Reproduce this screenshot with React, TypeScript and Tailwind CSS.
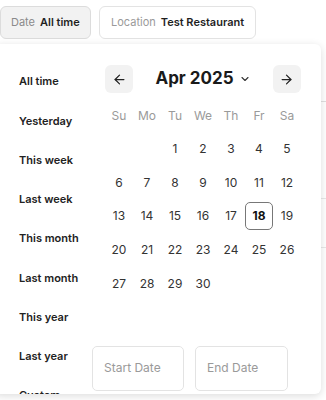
import React from "react";
import { ArrowLeft, ArrowRight, ChevronDown } from "lucide-react";

const presets = [
  "All time",
  "Yesterday",
  "This week",
  "Last week",
  "This month",
  "Last month",
  "This year",
  "Last year",
  "Custom",
];

const weekdays = ["Su", "Mo", "Tu", "We", "Th", "Fr", "Sa"];

const weeks: (number | null)[][] = [
  [null, null, 1, 2, 3, 4, 5],
  [6, 7, 8, 9, 10, 11, 12],
  [13, 14, 15, 16, 17, 18, 19],
  [20, 21, 22, 23, 24, 25, 26],
  [27, 28, 29, 30, null, null, null],
];

export default function App() {
  return (
    <div
      className="relative w-[326px] h-[400px] overflow-hidden bg-white text-[#1f1f1f]"
      style={{ fontFamily: "Inter, 'Noto Sans', sans-serif" }}
    >
      {/* background page */}
      <div className="flex gap-[8px] pt-[6px]">
        <div className="h-[33px] w-[91px] flex items-center pl-[10px] gap-[5px] rounded-[6px] border border-[#dcdcdc] bg-[#f2f2f2] text-[11px] whitespace-nowrap">
          <span className="text-[#8a8a8a]">Date</span>
          <span className="font-semibold text-[#1f1f1f]">All time</span>
        </div>
        <div className="h-[33px] w-[157px] flex items-center pl-[11px] gap-[5px] rounded-[6px] border border-[#e3e3e3] bg-white text-[11px] whitespace-nowrap">
          <span className="text-[#9a9a9a]">Location</span>
          <span className="font-semibold text-[#1f1f1f]">Test Restaurant</span>
        </div>
      </div>
      <div className="mt-[62px] border-t border-[#e0e0e0]" />
      <div className="mt-[96px] border-t border-[#e8e8e8]" />
      <div className="mt-[48px] border-t border-[#e8e8e8]" />

      {/* popover */}
      <div className="absolute left-[-6px] top-[44px] w-[327px] h-[350px] rounded-[6px] bg-white shadow-[0_2px_8px_rgba(0,0,0,0.14)] flex overflow-hidden">
        <div className="w-[98px] pl-[25px] pt-[18px] flex flex-col shrink-0">
          {presets.map((p) => (
            <div
              key={p}
              className="h-[39.25px] shrink-0 flex items-center text-[11px] font-semibold text-[#222] whitespace-nowrap"
            >
              {p}
            </div>
          ))}
        </div>
        <div className="flex flex-col pt-[21px]">
          <div className="ml-[13px] w-[196px]">
            <div className="flex items-center justify-between h-[28px]">
              <button className="w-[28px] h-[28px] rounded-[6px] bg-[#f2f2f2] flex items-center justify-center">
                <ArrowLeft size={15} strokeWidth={2} color="#222" />
              </button>
              <div className="flex items-center gap-[5px] text-[17px] font-bold text-[#1a1a1a]">
                <span>Apr 2025</span>
                <ChevronDown size={12} strokeWidth={2.2} color="#333" />
              </div>
              <button className="w-[28px] h-[28px] rounded-[6px] bg-[#f2f2f2] flex items-center justify-center">
                <ArrowRight size={15} strokeWidth={2} color="#222" />
              </button>
            </div>
            <div className="mt-[6px] h-[33px] grid grid-cols-7">
              {weekdays.map((d) => (
                <div
                  key={d}
                  className="flex items-center justify-center text-[12px] text-[#9a9a9a]"
                >
                  {d}
                </div>
              ))}
            </div>
            {weeks.map((w, i) => (
              <div key={i} className="h-[33.75px] grid grid-cols-7">
                {w.map((d, j) => (
                  <div key={j} className="flex items-center justify-center">
                    {d !== null && (
                      <div
                        className={
                          d === 18
                            ? "w-[28px] h-[28px] flex items-center justify-center rounded-[5px] border border-[#777] text-[12px] font-bold text-[#111]"
                            : "w-[28px] h-[28px] flex items-center justify-center text-[12px] text-[#333]"
                        }
                      >
                        {d}
                      </div>
                    )}
                  </div>
                ))}
              </div>
            ))}
          </div>
          <div className="mt-[45px] flex gap-[11px]">
            <div className="w-[92px] h-[45px] rounded-[5px] border border-[#e3e3e3] flex items-center pl-[11px] text-[12px] text-[#9a9a9a]">
              Start Date
            </div>
            <div className="w-[93px] h-[45px] rounded-[5px] border border-[#e3e3e3] flex items-center pl-[11px] text-[12px] text-[#9a9a9a]">
              End Date
            </div>
          </div>
        </div>
      </div>
    </div>
  );
}
